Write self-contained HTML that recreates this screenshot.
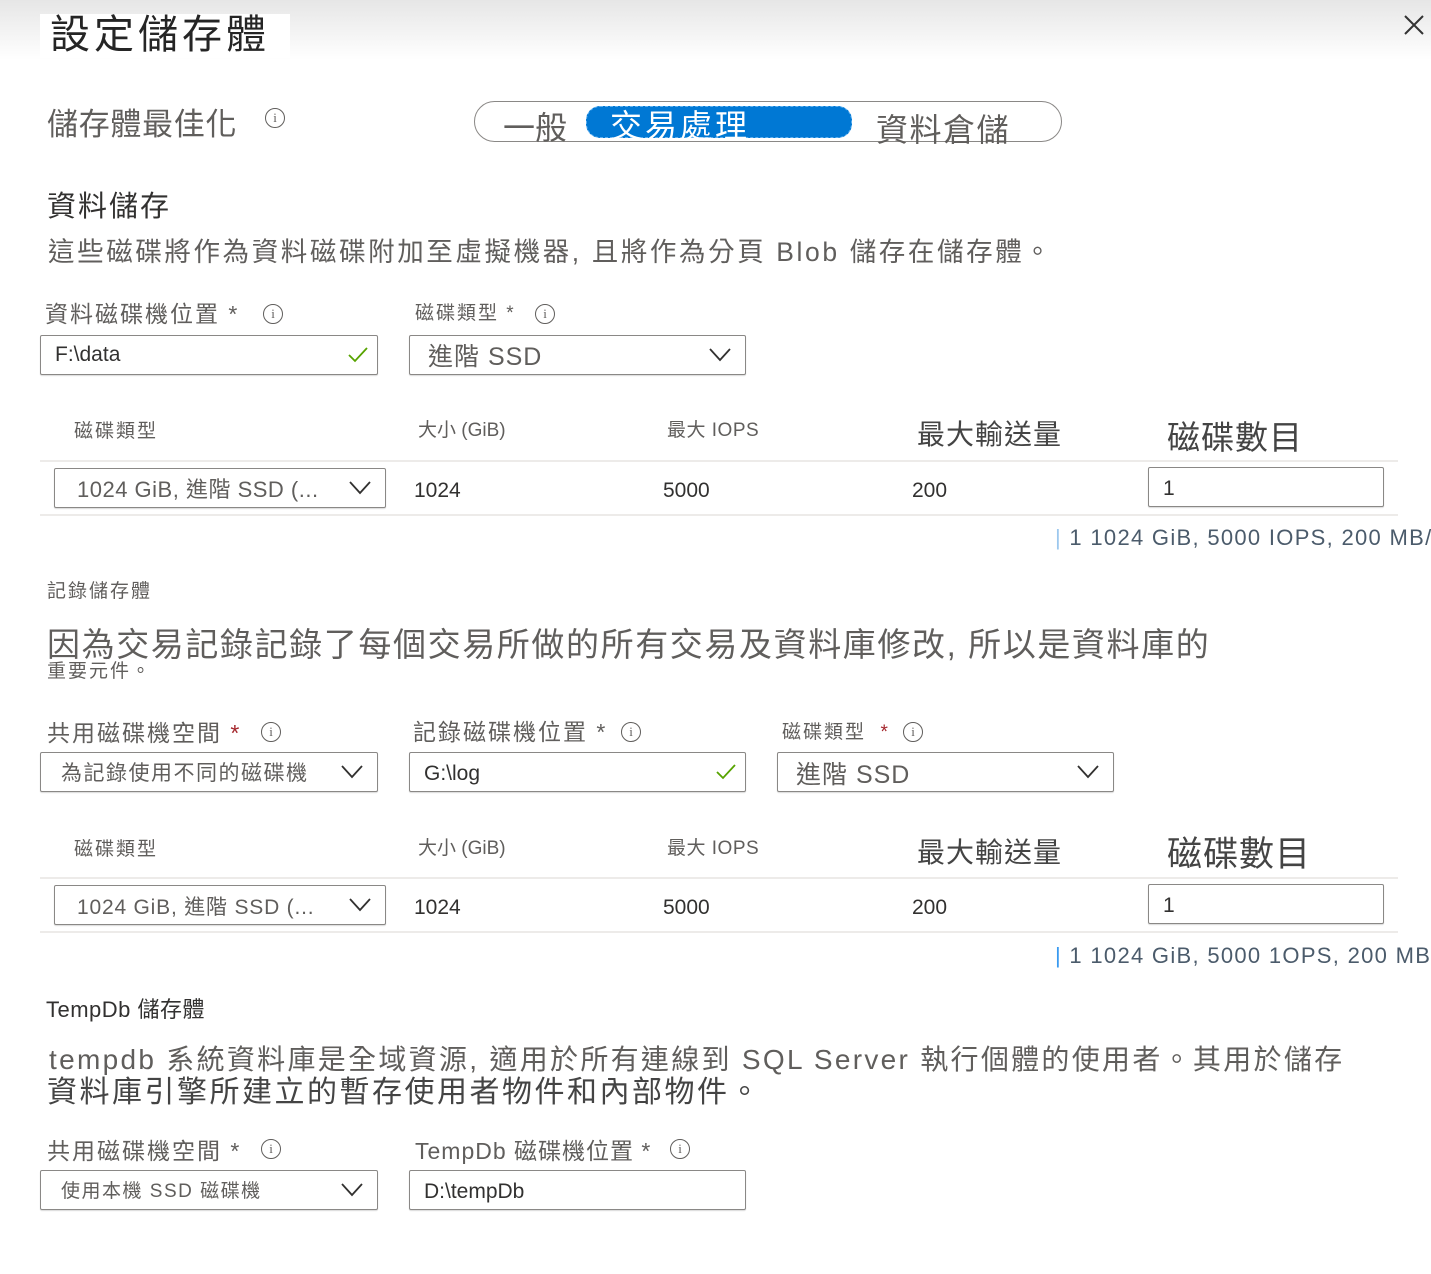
<!DOCTYPE html>
<html><head><meta charset="utf-8"><style>
*{margin:0;padding:0;box-sizing:border-box}
body{width:1431px;height:1274px;overflow:hidden;background:#fff;position:relative;font-family:"Liberation Sans","Noto Sans CJK TC",sans-serif;color:#323130}
#w{position:absolute;left:0;top:2px;width:1431px;height:1272px}
.a{position:absolute;white-space:nowrap;line-height:1}
.g{color:#605e5c}
.box{position:absolute;border:1px solid #8a8886;border-radius:2px;height:40px;background:#fff;box-shadow:0 1px 1px rgba(0,0,0,.15)}
.box span{position:absolute;left:14px;top:8px;font-size:21px;line-height:1;white-space:nowrap}
.chev{position:absolute;right:14px;top:12px;width:22px;height:14px}
.chk{position:absolute;right:8px;top:10px;width:22px;height:18px}
.info{display:inline-block;width:20px;height:20px;border:1.3px solid #605e5c;border-radius:50%;font-size:13px;line-height:18px;text-align:center;color:#605e5c;font-family:"Liberation Serif",serif;vertical-align:middle}
.hr{position:absolute;left:40px;width:1358px;height:2px;background:#edebe9}
.sum{color:#4b5b6b;font-size:22px;letter-spacing:1.3px}
.l{letter-spacing:2px}
</style></head><body>
<div style="position:absolute;left:0;top:0;width:1431px;height:60px;background:linear-gradient(#e6e6e6,#fff)"></div>
<div id="w">
<div style="position:absolute;left:40px;top:12px;width:250px;height:44px;background:#fff"></div>
<div class="a" style="left:50px;top:13px;font-size:40px;color:#252525;letter-spacing:4px">設定儲存體</div>
<svg style="position:absolute;left:1404px;top:13px" width="20" height="20"><path d="M1 1L19 19M19 1L1 19" stroke="#333" stroke-width="2"/></svg>

<div class="a g" style="left:47px;top:107px;font-size:31px;letter-spacing:.7px">儲存體最佳化</div>
<div class="a" style="left:265px;top:106px"><span class="info">i</span></div>
<div style="position:absolute;left:474px;top:99px;width:588px;height:41px;border:1.5px solid #8a8886;border-radius:21px"></div>
<div class="a g" style="left:503px;top:110px;font-size:32px">一般</div>
<div style="position:absolute;left:586px;top:104px;width:266px;height:32px;background:#0078d4;border-radius:14px;border:1.5px dashed #5fb0f0"></div>
<div class="a" style="left:610px;top:108px;font-size:32px;color:#fff;letter-spacing:3px">交易處理</div>
<div class="a g" style="left:876px;top:112px;font-size:32px;letter-spacing:1.5px">資料倉儲</div>

<div class="a" style="left:47px;top:191px;font-size:29px;letter-spacing:2px">資料儲存</div>
<div class="a g" style="left:48px;top:237px;font-size:26.5px;letter-spacing:2.6px">這些磁碟將作為資料磁碟附加至虛擬機器, 且將作為分頁 Blob 儲存在儲存體。</div>

<div class="a g l" style="left:45px;top:301px;font-size:23px">資料磁碟機位置 *</div>
<div class="a" style="left:263px;top:302px"><span class="info">i</span></div>
<div class="a g l" style="left:415px;top:302px;font-size:19px">磁碟類型 *</div>
<div class="a" style="left:535px;top:302px"><span class="info">i</span></div>
<div class="box" style="left:40px;top:333px;width:338px"><span>F:\data</span><svg class="chk" viewBox="0 0 22 18"><path d="M2 9L8 15L20 2" fill="none" stroke="#57a300" stroke-width="1.8"/></svg></div>
<div class="box" style="left:409px;top:333px;width:337px"><span class="g" style="font-size:25px;top:9px;left:18px;letter-spacing:1px">進階 SSD</span><svg class="chev" viewBox="0 0 22 14"><path d="M1 1L11 12L21 1" fill="none" stroke="#323130" stroke-width="1.8"/></svg></div>

<div class="a g l" style="left:74px;top:420px;font-size:19px">磁碟類型</div>
<div class="a g" style="left:418px;top:419px;font-size:19px">大小 (GiB)</div>
<div class="a g" style="left:667px;top:419px;font-size:19px;letter-spacing:.5px">最大 IOPS</div>
<div class="a" style="left:917px;top:419px;font-size:28px;color:#444;letter-spacing:1px">最大輸送量</div>
<div class="a" style="left:1167px;top:419px;font-size:33px;color:#444;letter-spacing:1px">磁碟數目</div>
<div class="hr" style="top:458px"></div>
<div class="box" style="left:54px;top:466px;width:332px"><span class="g" style="font-size:22px;left:22px;top:10px;letter-spacing:.5px">1024 GiB, 進階 SSD (...</span><svg class="chev" viewBox="0 0 22 14"><path d="M1 1L11 12L21 1" fill="none" stroke="#323130" stroke-width="1.8"/></svg></div>
<div class="a" style="left:414px;top:478px;font-size:21px">1024</div>
<div class="a" style="left:663px;top:478px;font-size:21px">5000</div>
<div class="a" style="left:912px;top:478px;font-size:21px">200</div>
<div class="box" style="left:1148px;top:465px;width:236px"><span style="left:14px;top:10px">1</span></div>
<div class="hr" style="top:512px"></div>
<div class="a sum" style="left:1055px;top:525px"><span style="color:#9cc8ee">|</span> 1 1024 GiB, 5000 IOPS, 200 MB/s</div>

<div class="a g l" style="left:47px;top:580px;font-size:19px">記錄儲存體</div>
<div class="a g" style="left:47px;top:626px;font-size:33px;letter-spacing:1.6px">因為交易記錄記錄了每個交易所做的所有交易及資料庫修改, 所以是資料庫的</div>
<div class="a g l" style="left:47px;top:660px;font-size:19px">重要元件。</div>

<div class="a g l" style="left:47px;top:720px;font-size:23px">共用磁碟機空間 <span style="color:#a4262c">*</span></div>
<div class="a" style="left:261px;top:720px"><span class="info">i</span></div>
<div class="a g l" style="left:413px;top:719px;font-size:23px">記錄磁碟機位置 *</div>
<div class="a" style="left:621px;top:720px"><span class="info">i</span></div>
<div class="a g l" style="left:782px;top:721px;font-size:19px">磁碟類型 <span style="color:#a4262c">&nbsp;*</span></div>
<div class="a" style="left:903px;top:720px"><span class="info">i</span></div>
<div class="box" style="left:40px;top:750px;width:338px"><span class="g" style="left:20px;top:10px;letter-spacing:1.5px">為記錄使用不同的磁碟機</span><svg class="chev" viewBox="0 0 22 14"><path d="M1 1L11 12L21 1" fill="none" stroke="#323130" stroke-width="1.8"/></svg></div>
<div class="box" style="left:409px;top:750px;width:337px"><span style="top:10px">G:\log</span><svg class="chk" viewBox="0 0 22 18"><path d="M2 9L8 15L20 2" fill="none" stroke="#57a300" stroke-width="1.8"/></svg></div>
<div class="box" style="left:777px;top:750px;width:337px"><span class="g" style="font-size:25px;left:18px;top:10px;letter-spacing:1px">進階 SSD</span><svg class="chev" viewBox="0 0 22 14"><path d="M1 1L11 12L21 1" fill="none" stroke="#323130" stroke-width="1.8"/></svg></div>

<div class="a g l" style="left:74px;top:838px;font-size:19px">磁碟類型</div>
<div class="a g" style="left:418px;top:837px;font-size:19px">大小 (GiB)</div>
<div class="a g" style="left:667px;top:837px;font-size:19px;letter-spacing:.5px">最大 IOPS</div>
<div class="a" style="left:917px;top:837px;font-size:28px;color:#444;letter-spacing:1px">最大輸送量</div>
<div class="a" style="left:1167px;top:835px;font-size:35px;color:#444;letter-spacing:1px">磁碟數目</div>
<div class="hr" style="top:875px"></div>
<div class="box" style="left:54px;top:883px;width:332px"><span class="g" style="font-size:21px;left:22px;top:11px;letter-spacing:.8px">1024 GiB, 進階 SSD (...</span><svg class="chev" viewBox="0 0 22 14"><path d="M1 1L11 12L21 1" fill="none" stroke="#323130" stroke-width="1.8"/></svg></div>
<div class="a" style="left:414px;top:895px;font-size:21px">1024</div>
<div class="a" style="left:663px;top:895px;font-size:21px">5000</div>
<div class="a" style="left:912px;top:895px;font-size:21px">200</div>
<div class="box" style="left:1148px;top:882px;width:236px"><span style="top:10px">1</span></div>
<div class="hr" style="top:929px"></div>
<div class="a sum" style="left:1055px;top:943px"><span style="color:#3a9af0">|</span> 1 1024 GiB, 5000 1OPS, 200 MB/s</div>

<div class="a" style="left:46px;top:997px;font-size:22px;letter-spacing:.5px">TempDb 儲存體</div>
<div class="a g" style="left:49px;top:1044px;font-size:28px;letter-spacing:2.3px">tempdb 系統資料庫是全域資源, 適用於所有連線到 SQL Server 執行個體的使用者。其用於儲存</div>
<div class="a" style="left:47px;top:1076px;font-size:30px;color:#444;letter-spacing:2.5px">資料庫引擎所建立的暫存使用者物件和內部物件。</div>

<div class="a g l" style="left:47px;top:1138px;font-size:23px">共用磁碟機空間 *</div>
<div class="a" style="left:261px;top:1137px"><span class="info">i</span></div>
<div class="a g" style="left:415px;top:1138px;font-size:23px;letter-spacing:1px">TempDb 磁碟機位置 *</div>
<div class="a" style="left:670px;top:1137px"><span class="info">i</span></div>
<div class="box" style="left:40px;top:1168px;width:338px"><span class="g" style="left:20px;font-size:19px;top:11px;letter-spacing:1.5px">使用本機 SSD 磁碟機</span><svg class="chev" viewBox="0 0 22 14"><path d="M1 1L11 12L21 1" fill="none" stroke="#323130" stroke-width="1.8"/></svg></div>
<div class="box" style="left:409px;top:1168px;width:337px"><span style="top:10px">D:\tempDb</span></div>
</div>
</body></html>
